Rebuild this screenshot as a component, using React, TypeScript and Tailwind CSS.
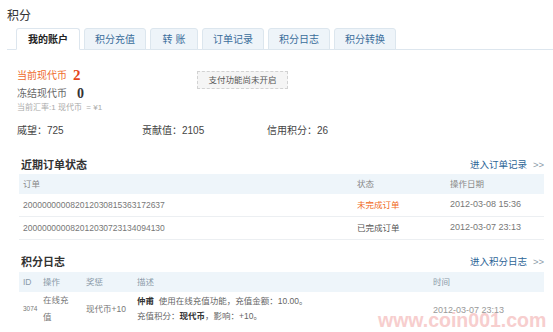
const tabs = ["我的账户", "积分充值", "转 账", "订单记录", "积分日志", "积分转换"];
const tabWidths = ["w-[64px]", "w-[62px]", "w-[48px]", "w-[62px]", "w-[62px]", "w-[62px]"];

const orders = [
  { id: "20000000008201203081536317263 7".replace(" ", ""), status: "未完成订单", done: false, date: "2012-03-08 15:36" },
  { id: "20000000008201203072313409413 0".replace(" ", ""), status: "已完成订单", done: true, date: "2012-03-07 23:13" },
];

function SectionTitle({ title, link }: { title: string; link: string }) {
  return (
    <div className="flex items-center justify-between h-[14px]">
      <span className="pl-[2px] text-[11px] leading-[14px] font-bold text-[#333]">{title}</span>
      <span className="text-[9.5px] leading-[14px] text-[#2c6496]">
        {link}
        <span className="ml-[6px] text-[#8a9aa8]">&gt;&gt;</span>
      </span>
    </div>
  );
}

export default function App() {
  return (
    <div className="relative w-[553px] h-[332px] overflow-hidden bg-white text-[#555] [font-family:'Liberation_Sans','Noto_Sans_CJK_SC',sans-serif]">
      <div className="pl-[7px] pt-[9px] text-[12px] leading-[14px] text-[#333]">积分</div>

      {/* tabs */}
      <div className="mt-[5px] ml-[7px] flex gap-[4px] pl-[9px] border-b border-[#dde6ee]">
        {tabs.map((t, i) => (
          <div
            key={t}
            className={`${tabWidths[i]} -mb-px h-[22px] flex items-center justify-center rounded-t-[3px] border text-[10px] ${
              i === 0
                ? "bg-white border-[#dde6ee] border-b-white font-bold text-[#222]"
                : "bg-[#eef4f9] border-[#dce6ee] text-[#3a6d9b]"
            }`}
          >
            {t}
          </div>
        ))}
      </div>

      {/* balance */}
      <div className="mt-[16px] pl-[17px] flex items-start">
        <div className="w-[180px]">
          <div className="h-[18px] flex items-center text-[10px] text-[#ee6a2a]">
            当前现代币
            <span className="ml-[6px] text-[15px] font-bold text-[#e4461c] [font-family:'Liberation_Serif',serif]">2</span>
          </div>
          <div className="h-[18px] flex items-center text-[10px] text-[#666]">
            冻结现代币
            <span className="ml-[10px] text-[14px] font-bold text-[#333] [font-family:'Liberation_Serif',serif]">0</span>
          </div>
          <div className="h-[12px] flex items-center text-[8px] text-[#aaa]">当前汇率:1 现代币 &nbsp;= ¥1</div>
        </div>
        <div className="mt-[5px] w-[91px] h-[18px] flex items-center justify-center border border-dashed border-[#d2d2d2] bg-[#f5f5f5] text-[8.5px] text-[#555]">
          支付功能尚未开启
        </div>
      </div>

      {/* stats */}
      <div className="mt-[10px] pl-[17px] flex text-[10px] leading-[14px] text-[#444]">
        <div className="w-[125px]">威望：725</div>
        <div className="w-[125px]">贡献值：2105</div>
        <div>信用积分：26</div>
      </div>

      {/* orders */}
      <div className="mt-[20px] ml-[19px] w-[525px]">
        <SectionTitle title="近期订单状态" link="进入订单记录" />
        <div className="mt-[2px] h-[20px] flex items-center bg-[#eef5fa] text-[8.5px] text-[#888]">
          <div className="w-[338px] pl-[4px]">订单</div>
          <div className="w-[93px]">状态</div>
          <div>操作日期</div>
        </div>
        {orders.map((o) => (
          <div key={o.id} className="h-[23px] flex items-center border-b border-[#eceff2] text-[8.5px] text-[#777]">
            <div className="w-[338px] pl-[4px]">{o.id}</div>
            <div className={`w-[93px] ${o.done ? "text-[#555]" : "text-[#f06a22]"}`}>{o.status}</div>
            <div className="text-[9px]">{o.date}</div>
          </div>
        ))}
      </div>

      {/* log */}
      <div className="mt-[15px] ml-[19px] w-[525px]">
        <SectionTitle title="积分日志" link="进入积分日志" />
        <div className="mt-[3px] h-[20px] flex items-center bg-[#eef5fa] text-[8.5px] text-[#8a9aa8]">
          <div className="w-[20px] pl-[4px]">ID</div>
          <div className="w-[43px] pl-[4px]">操作</div>
          <div className="w-[51px] pl-[4px]">奖惩</div>
          <div className="w-[296px] pl-[4px]">描述</div>
          <div className="pl-[4px]">时间</div>
        </div>
        <div className="h-[34px] flex items-center text-[8.5px] text-[#777]">
          <div className="w-[20px] pl-[4px] text-[6.5px]">3074</div>
          <div className="w-[43px] pl-[4px]">
            <div className="w-[30px] leading-[17px]">在线充值</div>
          </div>
          <div className="w-[51px] pl-[4px]">现代币+10</div>
          <div className="w-[296px] pl-[4px] leading-[15px] text-[#666]">
            <div>
              <b className="text-[#333]">仲甫</b>&nbsp; 使用在线充值功能，充值金额：10.00。
            </div>
            <div>
              充值积分：<b className="text-[#333]">现代币</b>，影响：+10。
            </div>
          </div>
          <div className="pl-[4px] pt-[3px] text-[9px] text-[#999]">2012-03-07 23:13</div>
        </div>
      </div>

      <div className="absolute left-[378px] top-[311px] text-[19.5px] leading-none font-bold text-[#f7c9c9] opacity-90">
        www.coin001.com
      </div>
    </div>
  );
}
